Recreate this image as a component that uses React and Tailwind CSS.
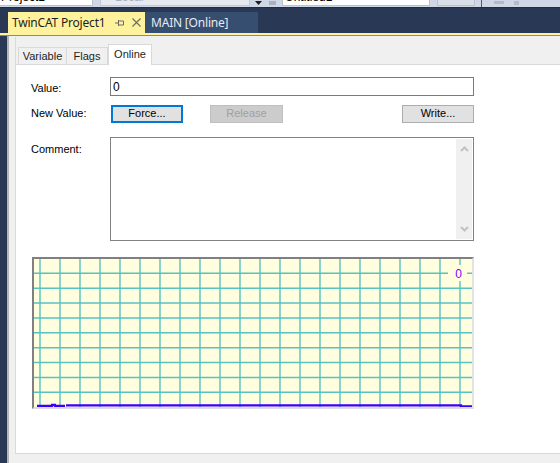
export default function App() {
  const vLines = Array.from({ length: 22 }, (_, i) => 6 + i * 20)
  const hLines = Array.from({ length: 9 }, (_, i) => 14.3 + i * 14.875)

  return (
    <div className="w-[560px] h-[463px] overflow-hidden flex flex-col bg-[#f0f0f0] font-['Liberation_Sans',Arial,sans-serif] text-[11px] text-black">
      {/* toolbar strip (cut off at the top of the shot) */}
      <div className="h-[8px] bg-[#cfd6e5] flex items-start overflow-hidden border-b border-[#1e2c44]">
        <div className="w-[93px] h-[6px] bg-white border-b border-r border-[#b9c1d1] overflow-hidden">
          <div className="-mt-[10px] text-[12px] leading-[14px] text-black pl-[1px]">Project1</div>
        </div>
        <div className="ml-[7px] w-[150px] h-[6px] bg-[#e6e9f0] border-b border-x border-[#c2c8d4] overflow-hidden">
          <div className="-mt-[10px] pl-[14px] text-[12px] leading-[14px] text-[#a8aebb]">Local</div>
        </div>
        <svg className="ml-[5px] mt-[1px]" width="8" height="5" viewBox="0 0 8 5">
          <path d="M0 0h7L3.5 4z" fill="#1e1e1e" />
        </svg>
        <div className="ml-[6px] mt-[1px] w-[7px] h-[4px] bg-[#a9b1c2]" />
        <div className="ml-[6px] w-[148px] h-[6px] bg-white border-b border-x border-[#b9c1d1] overflow-hidden">
          <div className="-mt-[10px] pl-[2px] text-[12px] leading-[14px] text-black">Untitled1</div>
        </div>
        <div className="ml-[7px] w-[38px] h-[6px] bg-[#d9dee8] border-b border-x border-[#b9c1d1]" />
        <div className="ml-[6px] w-[1px] h-[8px] bg-[#555b66]" />
        <div className="ml-[12px] mt-[1px] w-[10px] h-[3px] bg-[#b3bac8]" />
        <div className="ml-[10px] mt-[1px] w-[5px] h-[4px] bg-[#b3bac8]" />
      </div>

      {/* document tabs */}
      <div className="h-[25px] bg-[#293955] flex items-end pl-[8px]">
        <div className="w-[137px] h-[21px] bg-[#fff29d] flex items-center pl-[4px] font-['Noto_Sans',sans-serif] text-[12px] text-[#1e1e1e]">
          <span className="tracking-[-0.2px]">TwinCAT Project1</span>
          <svg className="ml-[10px]" width="10" height="10" viewBox="0 0 10 10">
            <path d="M0 5h3M3.5 2v6M3.5 3h5v4h-5" fill="none" stroke="#6a6a6a" strokeWidth="1" />
          </svg>
          <svg className="ml-[7px]" width="9" height="9" viewBox="0 0 9 9">
            <path d="M0.5 0.5l8 8M8.5 0.5l-8 8" stroke="#6a6a6a" strokeWidth="1.1" />
          </svg>
        </div>
        <div className="w-[113px] h-[21px] bg-[#364e6f] flex items-center pl-[6px] font-['Noto_Sans',sans-serif] text-[12px] text-[#e6ebf2]">
          <span className="tracking-[-0.2px]">MAIN [Online]</span>
        </div>
      </div>
      <div className="h-[2px] bg-[#fff29d]" />
      <div className="h-[1px] bg-[#8a8a8a]" />

      {/* body */}
      <div className="flex-1 flex min-h-0">
        <div className="w-[7px] bg-[#293955]" />
        <div className="w-[2px] bg-[#b4b4b4]" />
        <div className="flex-1 pl-[6px] pt-[1px] pb-[9px] flex">
          <div className="flex-1 flex flex-col border-l border-b border-[#d9d9d9]">
            {/* sub tabs */}
            <div className="h-[27px] flex items-end pl-[2px]">
              <div className="w-[49px] h-[17px] border border-b-0 border-[#d9d9d9] bg-[#f0f0f0] flex items-center justify-center text-[#1e1e1e]">
                Variable
              </div>
              <div className="w-[41px] h-[17px] border border-b-0 border-l-0 border-[#d9d9d9] bg-[#f0f0f0] flex items-center justify-center text-[#1e1e1e]">
                Flags
              </div>
              <div className="w-[44px] h-[21px] -mb-px relative z-10 border border-b-0 border-[#d9d9d9] bg-white flex items-center justify-center pb-[1px] text-[#1e1e1e]">
                Online
              </div>
            </div>

            {/* page */}
            <div className="flex-1 bg-white border-t border-[#d9d9d9] pl-[15px] flex flex-col">
              <div className="mt-[12px] flex">
                <div className="w-[79px] pt-[3px]">Value:</div>
                <div className="w-[364px] h-[19px] border border-[#7a7a7a] px-[2px] flex items-center text-[12px]">0</div>
              </div>

              <div className="mt-[8px] flex h-[18px]">
                <div className="w-[80px]">New Value:</div>
                <div className="w-[72px] h-[18px] border-2 border-[#0078d7] bg-[#e1e1e1] flex items-center justify-center">
                  Force...
                </div>
                <div className="ml-[27px] w-[73px] h-[18px] border border-[#bfbfbf] bg-[#cccccc] flex items-center justify-center text-[#a0a0a0]">
                  Release
                </div>
                <div className="ml-[119px] w-[72px] h-[18px] border border-[#adadad] bg-[#e1e1e1] flex items-center justify-center">
                  Write...
                </div>
              </div>

              <div className="mt-[14px] flex">
                <div className="w-[79px] pt-[4px]">Comment:</div>
                <div className="w-[364px] h-[104px] border border-[#828282] flex justify-end p-[1px]">
                  <div className="w-[16px] bg-[#f0f0f0] flex flex-col items-center justify-between py-[7px]">
                    <svg width="9" height="6" viewBox="0 0 9 6">
                      <path d="M1 5l3.5-3.5L8 5" fill="none" stroke="#c2c2c2" strokeWidth="2" />
                    </svg>
                    <svg width="9" height="6" viewBox="0 0 9 6">
                      <path d="M1 1l3.5 3.5L8 1" fill="none" stroke="#c2c2c2" strokeWidth="2" />
                    </svg>
                  </div>
                </div>
              </div>

              {/* chart */}
              <div className="mt-[16px] ml-[1px] w-[442px] h-[152px] border-2 border-t-[#808080] border-l-[#808080] border-r-[#e3e3e3] border-b-[#dcdcdc] bg-[#ffffe0]">
                <svg width="438" height="148" viewBox="0 0 438 148" className="block">
                  {vLines.map(x => (
                    <line key={'v' + x} x1={x} y1="0" x2={x} y2="148" stroke="#56c2c2" strokeWidth="1.4" />
                  ))}
                  {hLines.map(y => (
                    <line key={'h' + y} x1="0" y1={y} x2="438" y2={y} stroke="#56c2c2" strokeWidth="1.4" />
                  ))}
                  <rect x="414" y="6" width="19" height="16" fill="#ffffe0" />
                  <text x="424.5" y="18.5" textAnchor="middle" fontSize="12" fill="#8000ff" fontFamily="Liberation Sans, Arial, sans-serif">0</text>
                  <path d="M3 146.8H18V145.8H21V146.8H31" fill="none" stroke="#3a00ff" strokeWidth="2.2" />
                  <path d="M32 146.3H427V147.3H438" fill="none" stroke="#3a00ff" strokeWidth="2.2" />
                </svg>
              </div>
            </div>
          </div>
        </div>
      </div>
    </div>
  )
}
